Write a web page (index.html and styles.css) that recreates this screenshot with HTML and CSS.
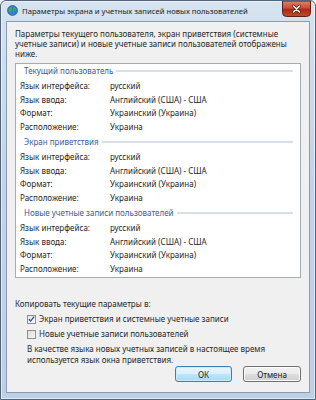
FILE: index.html
```html
<!DOCTYPE html>
<html lang="ru">
<head>
<meta charset="utf-8">
<link rel="stylesheet" href="styles.css">
</head>
<body>
<div class="window">
  <div class="titlebar">
    <svg class="app-icon" width="11" height="11" viewBox="0 0 11 11">
      <circle cx="5.5" cy="5.5" r="5" fill="#2f7fd0"/>
      <path d="M2 3.5 C3 2 4.5 2 5 3 C5.5 4 4 4.5 4.5 6 C4.8 7 3.5 8 2.5 7 C1.5 6 1.3 4.5 2 3.5 Z" fill="#4cae3c"/>
      <path d="M6.5 2 C8 2 9.5 3.5 9.3 5 C8.5 5.5 7.5 4.5 7 5.5 C6.5 6.5 7.5 8 6.5 9 C6 8 5.8 6.5 6.2 5.5 C6.5 4.5 5.8 3 6.5 2 Z" fill="#4cae3c"/>
      <circle cx="5.5" cy="5.5" r="5" fill="none" stroke="#1b4f8a" stroke-width="0.6"/>
    </svg>
    <span class="title">Параметры экрана и учетных записей новых пользователей</span>
    <svg class="caption-btn" width="29" height="16" viewBox="0 0 29 16">
      <defs>
        <linearGradient id="cg" x1="0" y1="0" x2="0" y2="1">
          <stop offset="0" stop-color="#dc8470"/>
          <stop offset="0.45" stop-color="#c94d36"/>
          <stop offset="0.55" stop-color="#ad2914"/>
          <stop offset="1" stop-color="#c54a2e"/>
        </linearGradient>
      </defs>
      <path d="M0.5 0 V11.5 Q0.5 15.5 4.5 15.5 H24.5 Q28.5 15.5 28.5 11.5 V0 Z" fill="url(#cg)" stroke="#5e1f17" stroke-width="1"/>
      <path d="M11.5 5 L17.5 11 M17.5 5 L11.5 11" stroke="#3a0c06" stroke-width="2.8" stroke-linecap="round"/>
      <path d="M11.5 5 L17.5 11 M17.5 5 L11.5 11" stroke="#ffffff" stroke-width="1.6" stroke-linecap="round"/>
    </svg>
  </div>
  <div class="client">
    <p class="intro">Параметры текущего пользователя, экран приветствия (системные учетные записи) и новые учетные записи пользователей отображены ниже.</p>
    <div class="panel">
      <div class="group">
        <div class="heading"><span>Текущий пользователь</span></div>
        <div class="rows">
          <span>Язык интерфейса:</span><span>русский</span>
          <span>Язык ввода:</span><span>Английский (США) - США</span>
          <span>Формат:</span><span>Украинский (Украина)</span>
          <span>Расположение:</span><span>Украина</span>
        </div>
      </div>
      <div class="group">
        <div class="heading"><span>Экран приветствия</span></div>
        <div class="rows">
          <span>Язык интерфейса:</span><span>русский</span>
          <span>Язык ввода:</span><span>Английский (США) - США</span>
          <span>Формат:</span><span>Украинский (Украина)</span>
          <span>Расположение:</span><span>Украина</span>
        </div>
      </div>
      <div class="group">
        <div class="heading"><span>Новые учетные записи пользователей</span></div>
        <div class="rows">
          <span>Язык интерфейса:</span><span>русский</span>
          <span>Язык ввода:</span><span>Английский (США) - США</span>
          <span>Формат:</span><span>Украинский (Украина)</span>
          <span>Расположение:</span><span>Украина</span>
        </div>
      </div>
    </div>
    <div class="copy-label">Копировать текущие параметры в:</div>
    <label class="check"><span class="box checked"><svg width="8" height="8" viewBox="0 0 8 8"><path d="M1 4.2 L3 6.3 L7 1.2" fill="none" stroke="#1d4c9c" stroke-width="1.4"/></svg></span>Экран приветствия и системные учетные записи</label>
    <label class="check"><span class="box"></span>Новые учетные записи пользователей</label>
    <p class="note">В качестве языка новых учетных записей в настоящее время используется язык окна приветствия.</p>
    <div class="buttons">
      <button class="btn default">ОК</button>
      <button class="btn">Отмена</button>
    </div>
  </div>
</div>
</body>
</html>
```
FILE: styles.css
```css
* { box-sizing: border-box; }
html, body { margin: 0; padding: 0; background: #ffffff; }
body {
  font-family: "Noto Sans", "Open Sans", sans-serif;
  font-size: 8px;
  color: #262626;
}
.window {
  width: 316px;
  height: 400px;
  border: 1px solid #53637a;
  border-radius: 6px 6px 0 0;
  background: linear-gradient(180deg, #d6e3f0 0%, #c3d5e8 40%, #bccfe3 100%);
  padding: 0 5px 6px 5px;
  display: flex;
  flex-direction: column;
  box-shadow: inset 0 0 0 1px rgba(255,255,255,0.55);
}
.titlebar {
  height: 20px;
  display: flex;
  align-items: center;
  gap: 4px;
  padding-left: 1px;
  flex-shrink: 0;
}
.app-icon { flex-shrink: 0; margin-top: -1px; }
.title {
  font-size: 7.7px;
  color: #1c1c1c;
  white-space: nowrap;
  margin-top: -1px;
}
.caption-btn {
  margin-left: auto;
  align-self: flex-start;
  flex-shrink: 0;
  margin-right: -1px;
  display: block;
}
.client {
  flex: 1;
  background: #f0f0f0;
  border: 1px solid #8b9cb0;
  padding: 7px 8px 0 8px;
  display: flex;
  flex-direction: column;
}
.intro {
  margin: 0;
  padding-right: 12px;
  line-height: 10px;
}
.panel {
  margin-top: 4px;
  height: 215px;
  background: #ffffff;
  border: 1px solid #a6acb5;
  padding: 0 7px 0 4px;
  flex-shrink: 0;
}
.group + .group { margin-top: 2px; }
.heading {
  display: flex;
  align-items: center;
  gap: 3px;
  padding-left: 4px;
  line-height: 13px;
  color: #3b5aa0;
}
.heading::after {
  content: "";
  flex: 1;
  height: 2px;
  background: #d8dfeb;
}
.rows {
  display: grid;
  grid-template-columns: 90px 1fr;
  padding-top: 2px;
  line-height: 13.5px;
}
.copy-label {
  margin-top: 20px;
  line-height: 12px;
}
.check {
  display: flex;
  align-items: center;
  gap: 3px;
  margin-left: 12px;
  margin-top: 3px;
  line-height: 12px;
}
.box {
  width: 9px;
  height: 9px;
  border: 1px solid #8f8f8f;
  background: linear-gradient(135deg, #dcdcdc, #f6f6f6);
  display: flex;
  align-items: center;
  justify-content: center;
}
.box.checked { background: linear-gradient(135deg, #e4e4e4, #fbfbfb); }
.note {
  margin: 3px 0 0 12px;
  line-height: 11px;
}
.buttons {
  display: flex;
  justify-content: flex-end;
  gap: 11px;
  margin-top: 1px;
}
.btn {
  font-family: inherit;
  font-size: 8px;
  color: #1a1a1a;
  height: 16px;
  border-radius: 3px;
  padding: 0;
  border: 1px solid #707070;
  background: linear-gradient(180deg, #f2f2f2 0%, #ebebeb 48%, #dddddd 52%, #cfcfcf 100%);
  box-shadow: inset 0 0 0 1px #fcfcfc;
}
.btn:first-child { width: 57px; }
.btn:last-child { width: 58px; }
.btn.default {
  border-color: #3c7fb1;
  background: linear-gradient(180deg, #eaf6fd 0%, #d9f0fc 48%, #bee6fd 52%, #a7d9f5 100%);
  box-shadow: inset 0 0 0 1px #c9ecff;
}
```
